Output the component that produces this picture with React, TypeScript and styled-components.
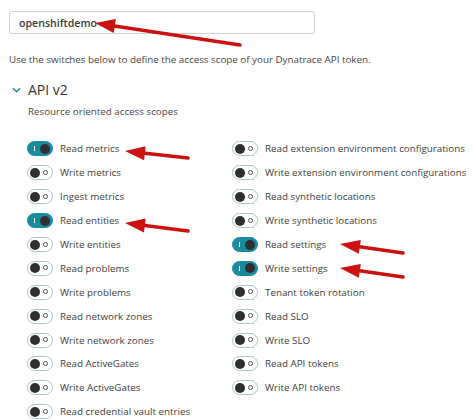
import styled, { createGlobalStyle, css } from "styled-components";

const leftScopes = [
  { label: "Read metrics", on: true },
  { label: "Write metrics", on: false },
  { label: "Ingest metrics", on: false },
  { label: "Read entities", on: true },
  { label: "Write entities", on: false },
  { label: "Read problems", on: false },
  { label: "Write problems", on: false },
  { label: "Read network zones", on: false },
  { label: "Write network zones", on: false },
  { label: "Read ActiveGates", on: false },
  { label: "Write ActiveGates", on: false },
  { label: "Read credential vault entries", on: false },
];

const rightScopes = [
  { label: "Read extension environment configurations", on: false },
  { label: "Write extension environment configurations", on: false },
  { label: "Read synthetic locations", on: false },
  { label: "Write synthetic locations", on: false },
  { label: "Read settings", on: true },
  { label: "Write settings", on: true },
  { label: "Tenant token rotation", on: false },
  { label: "Read SLO", on: false },
  { label: "Write SLO", on: false },
  { label: "Read API tokens", on: false },
  { label: "Write API tokens", on: false },
];

// annotation arrows: tail -> tip
const arrows = [
  { x1: 240, y1: 45, x2: 95, y2: 23 },
  { x1: 188, y1: 158, x2: 125, y2: 151 },
  { x1: 188, y1: 231, x2: 125, y2: 223 },
  { x1: 403, y1: 253, x2: 340, y2: 244 },
  { x1: 403, y1: 277, x2: 340, y2: 268 },
];

export default function App() {
  return (
    <>
      <GlobalStyle />
      <Page>
        <NameInput value="openshiftdemo" readOnly />
        <Description>
          Use the switches below to define the access scope of your Dynatrace API token.
        </Description>
        <SectionHeader>
          <Chevron viewBox="0 0 10 6">
            <path d="M1 1 L5 5 L9 1" />
          </Chevron>
          API v2
        </SectionHeader>
        <SectionHint>Resource oriented access scopes</SectionHint>
        <ScopeGrid>
          <ScopeColumn>
            {leftScopes.map((s) => (
              <ScopeRow key={s.label}>
                <Toggle $on={s.on}>
                  <Knob $on={s.on} />
                </Toggle>
                {s.label}
              </ScopeRow>
            ))}
          </ScopeColumn>
          <ScopeColumn>
            {rightScopes.map((s) => (
              <ScopeRow key={s.label}>
                <Toggle $on={s.on}>
                  <Knob $on={s.on} />
                </Toggle>
                {s.label}
              </ScopeRow>
            ))}
          </ScopeColumn>
        </ScopeGrid>
        <Annotations viewBox="0 0 474 420">
          {arrows.map((a, i) => {
            const dx = a.x2 - a.x1;
            const dy = a.y2 - a.y1;
            const len = Math.hypot(dx, dy);
            const ux = dx / len;
            const uy = dy / len;
            const head = 20;
            const half = 7;
            const bx = a.x2 - ux * head;
            const by = a.y2 - uy * head;
            const pts = `${a.x2},${a.y2} ${bx - uy * half},${by + ux * half} ${bx + uy * half},${by - ux * half}`;
            return (
              <g key={i}>
                <line x1={a.x1} y1={a.y1} x2={bx + ux * 2} y2={by + uy * 2} />
                <polygon points={pts} />
              </g>
            );
          })}
        </Annotations>
      </Page>
    </>
  );
}

const GlobalStyle = createGlobalStyle`
  body {
    margin: 0;
    background: #ffffff;
    font-family: "Open Sans", "Liberation Sans", sans-serif;
    color: #454646;
  }
`;

const Page = styled.div`
  position: relative;
  width: 474px;
  height: 420px;
  overflow: hidden;
  padding: 11px 0 0 9px;
  box-sizing: border-box;
`;

const NameInput = styled.input`
  display: block;
  width: 306px;
  height: 23px;
  box-sizing: border-box;
  border: 1px solid #cfd0d0;
  border-radius: 3px;
  padding: 0 9px;
  font-family: inherit;
  font-size: 10.6px;
  font-weight: 600;
  color: #3a3a3a;
  outline: none;
`;

const Description = styled.p`
  margin: 19px 0 0;
  font-size: 9.8px;
  line-height: 14px;
  color: #454646;
`;

const SectionHeader = styled.div`
  display: flex;
  align-items: center;
  gap: 7px;
  margin-top: 14px;
  padding-left: 3px;
  font-size: 14px;
  line-height: 18px;
  color: #353535;
`;

const Chevron = styled.svg`
  width: 9px;
  height: 6px;
  fill: none;
  stroke: #1a8a9a;
  stroke-width: 1.6;
`;

const SectionHint = styled.div`
  margin: 6px 0 0 19px;
  font-size: 9.8px;
  line-height: 13px;
  color: #454646;
`;

const ScopeGrid = styled.div`
  display: grid;
  grid-template-columns: 205px 1fr;
  margin: 19px 0 0 18px;
`;

const ScopeColumn = styled.div`
  display: flex;
  flex-direction: column;
`;

const ScopeRow = styled.div`
  display: flex;
  align-items: center;
  gap: 7px;
  height: 23.9px;
  font-size: 9.8px;
  color: #3f4040;
  white-space: nowrap;
`;

const Toggle = styled.span<{ $on: boolean }>`
  position: relative;
  flex: none;
  width: 26px;
  height: 15px;
  border-radius: 8px;
  box-sizing: border-box;
  ${(p) =>
    p.$on
      ? css`
          background: #1a8b9c;
          border: 1px solid #1a8b9c;
          &::before {
            content: "";
            position: absolute;
            left: 6px;
            top: 4px;
            width: 1px;
            height: 5px;
            background: #ffffff;
          }
        `
      : css`
          background: #ffffff;
          border: 1.5px solid #a9c3c8;
          &::after {
            content: "";
            position: absolute;
            right: 4px;
            top: 3.5px;
            width: 3px;
            height: 3px;
            border: 1px solid #555;
            border-radius: 50%;
          }
        `}
`;

const Knob = styled.span<{ $on: boolean }>`
  position: absolute;
  top: 50%;
  width: 10px;
  height: 10px;
  margin-top: -5px;
  border-radius: 50%;
  background: #2e2f30;
  ${(p) => (p.$on ? "right: 2px;" : "left: 2px;")}
`;

const Annotations = styled.svg`
  position: absolute;
  inset: 0;
  width: 474px;
  height: 420px;
  pointer-events: none;
  stroke: #cc1111;
  fill: #cc1111;
  line {
    stroke-width: 3.5;
    stroke-linecap: round;
  }
  polygon {
    stroke: none;
  }
`;
